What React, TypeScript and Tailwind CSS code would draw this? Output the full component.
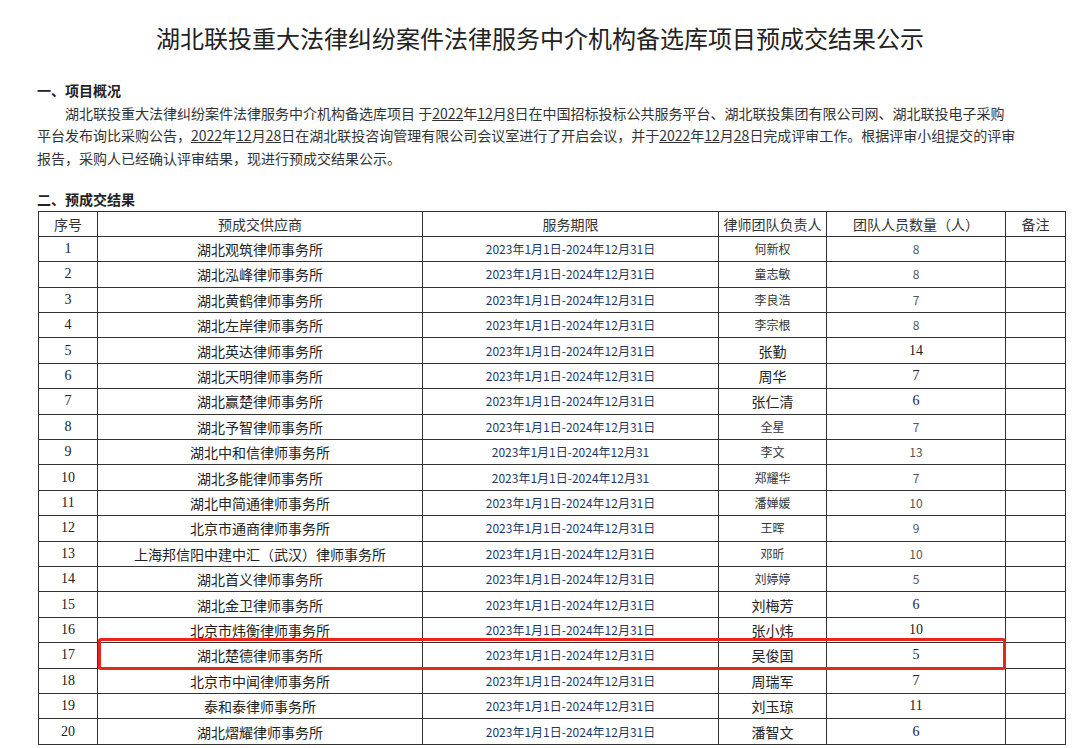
const rows: [string, string, string, string, boolean][] = [
  ["湖北观筑律师事务所", "2023年1月1日-2024年12月31日", "何新权", "8", false],
  ["湖北泓峰律师事务所", "2023年1月1日-2024年12月31日", "童志敏", "8", false],
  ["湖北黄鹤律师事务所", "2023年1月1日-2024年12月31日", "李良浩", "7", false],
  ["湖北左岸律师事务所", "2023年1月1日-2024年12月31日", "李宗根", "8", false],
  ["湖北英达律师事务所", "2023年1月1日-2024年12月31日", "张勤", "14", true],
  ["湖北天明律师事务所", "2023年1月1日-2024年12月31日", "周华", "7", true],
  ["湖北赢楚律师事务所", "2023年1月1日-2024年12月31日", "张仁清", "6", true],
  ["湖北予智律师事务所", "2023年1月1日-2024年12月31日", "全星", "7", false],
  ["湖北中和信律师事务所", "2023年1月1日-2024年12月31", "李文", "13", false],
  ["湖北多能律师事务所", "2023年1月1日-2024年12月31", "郑耀华", "7", false],
  ["湖北申简通律师事务所", "2023年1月1日-2024年12月31日", "潘婵媛", "10", false],
  ["北京市通商律师事务所", "2023年1月1日-2024年12月31日", "王晖", "9", false],
  ["上海邦信阳中建中汇（武汉）律师事务所", "2023年1月1日-2024年12月31日", "邓昕", "10", false],
  ["湖北首义律师事务所", "2023年1月1日-2024年12月31日", "刘婷婷", "5", false],
  ["湖北金卫律师事务所", "2023年1月1日-2024年12月31日", "刘梅芳", "6", true],
  ["北京市炜衡律师事务所", "2023年1月1日-2024年12月31日", "张小炜", "10", true],
  ["湖北楚德律师事务所", "2023年1月1日-2024年12月31日", "吴俊国", "5", true],
  ["北京市中闻律师事务所", "2023年1月1日-2024年12月31日", "周瑞军", "7", true],
  ["泰和泰律师事务所", "2023年1月1日-2024年12月31日", "刘玉琼", "11", true],
  ["湖北熠耀律师事务所", "2023年1月1日-2024年12月31日", "潘智文", "6", true],
];

const U = ({ c }: { c: string }) => <span className="underline">{c}</span>;
const td = "border border-[#333] text-center p-0 h-[25.4px] leading-[18px]";

export default function App() {
  return (
    <div className="w-[1080px] h-[748px] overflow-hidden bg-white text-[#222]" style={{ fontFamily: '"Liberation Serif","Noto Sans CJK SC",serif' }}>
      <h1 className="text-center text-[24px] text-[#222] pt-[20px] leading-[36px]" style={{ fontFamily: '"Noto Sans CJK SC",sans-serif' }}>湖北联投重大法律纠纷案件法律服务中介机构备选库项目预成交结果公示</h1>
      <div className="pl-[37px] pr-[62px] mt-[23px] text-[14px] leading-[22.5px]" style={{ fontFamily: '"Noto Sans CJK SC",sans-serif' }}>
        <div className="font-bold">一、项目概况</div>
        <p className="indent-[28px] text-[#333]">湖北联投重大法律纠纷案件法律服务中介机构备选库项目 于<U c="2022" />年<U c="12" />月<U c="8" />日在中国招标投标公共服务平台、湖北联投集团有限公司网、湖北联投电子采购平台发布询比采购公告，<U c="2022" />年<U c="12" />月<U c="28" />日在湖北联投咨询管理有限公司会议室进行了开启会议，并于<U c="2022" />年<U c="12" />月<U c="28" />日完成评审工作。根据评审小组提交的评审报告，采购人已经确认评审结果，现进行预成交结果公示。</p>
        <div className="font-bold mt-[19px]">二、预成交结果</div>
      </div>
      <div className="relative ml-[38px] w-[1027px]">
        <table className="w-[1027px] border-collapse table-fixed text-[14px]" style={{ fontFamily: '"Noto Sans CJK SC",sans-serif' }}>
          <colgroup>
            <col className="w-[59px]" /><col className="w-[325px]" /><col className="w-[296px]" /><col className="w-[108px]" /><col className="w-[179px]" /><col className="w-[60px]" />
          </colgroup>
          <thead>
            <tr className="text-[#333]">
              {["序号", "预成交供应商", "服务期限", "律师团队负责人", "团队人员数量（人）", "备注"].map((h) => (
                <td key={h} className={td}>{h}</td>
              ))}
            </tr>
          </thead>
          <tbody>
            {rows.map(([n, d, p, c, serif], i) => (
              <tr key={i}>
                <td className={td} style={{ fontFamily: '"Liberation Serif",serif' }}>{i + 1}</td>
                <td className={td}>{n}</td>
                <td className={td + " text-[12px] text-[#1f3864]"}>{d}</td>
                <td className={td + (serif ? " text-[14px]" : " text-[12px] text-[#333]")}>{p}</td>
                <td className={td + (serif ? " text-[14px]" : " text-[12px] text-[#555]")} style={serif ? { fontFamily: '"Liberation Serif",serif' } : {}}>{c}</td>
                <td className={td}></td>
              </tr>
            ))}
          </tbody>
        </table>
        <div className="absolute left-[60px] w-[908px] top-[427px] h-[32px] border-[3px] border-[#e8261c] rounded-[3px] pointer-events-none" />
      </div>
    </div>
  );
}
